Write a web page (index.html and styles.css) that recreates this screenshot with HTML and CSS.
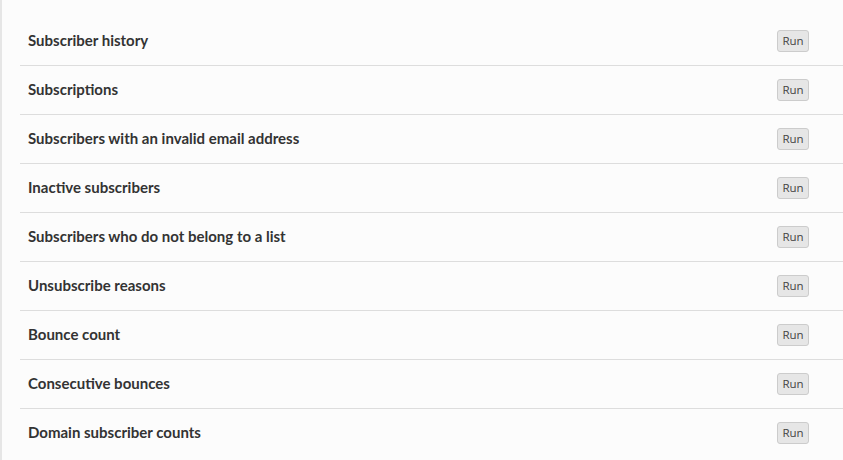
FILE: index.html
```html
<!DOCTYPE html>
<html>
<head>
<meta charset="utf-8">
<link rel="stylesheet" href="styles.css">
</head>
<body>
<div class="page">
  <ul class="reports">
    <li class="report"><span class="name">Subscriber history</span><button class="run">Run</button></li>
    <li class="report"><span class="name">Subscriptions</span><button class="run">Run</button></li>
    <li class="report"><span class="name">Subscribers with an invalid email address</span><button class="run">Run</button></li>
    <li class="report"><span class="name">Inactive subscribers</span><button class="run">Run</button></li>
    <li class="report"><span class="name">Subscribers who do not belong to a list</span><button class="run">Run</button></li>
    <li class="report"><span class="name">Unsubscribe reasons</span><button class="run">Run</button></li>
    <li class="report"><span class="name">Bounce count</span><button class="run">Run</button></li>
    <li class="report"><span class="name">Consecutive bounces</span><button class="run">Run</button></li>
    <li class="report"><span class="name">Domain subscriber counts</span><button class="run">Run</button></li>
  </ul>
</div>
</body>
</html>
```
FILE: styles.css
```css
html, body {
  margin: 0;
  padding: 0;
  background: #fcfcfc;
  height: 100%;
  overflow: hidden;
}
.page {
  border-left: 2px solid #e6e6e6;
  height: 100%;
  padding: 16px 0 0 18px;
  box-sizing: border-box;
  font-family: "Lato", "Noto Sans", sans-serif;
  color: #333;
}
.reports {
  list-style: none;
  margin: 0;
  padding: 0;
}
.report {
  display: flex;
  align-items: center;
  justify-content: space-between;
  height: 49px;
  padding: 0 34px 0 8px;
  box-sizing: border-box;
}
.report + .report {
  border-top: 1px solid #dddddd;
}
.name {
  font-size: 15px;
  font-weight: 700;
  padding-bottom: 2px;
}
.run {
  font-family: "Open Sans", sans-serif;
  font-size: 11.5px;
  color: #444;
  background: #e6e6e6;
  border: 1px solid #cccccc;
  border-radius: 3px;
  width: 32px;
  height: 22px;
  padding: 0;
  line-height: 20px;
}
```
